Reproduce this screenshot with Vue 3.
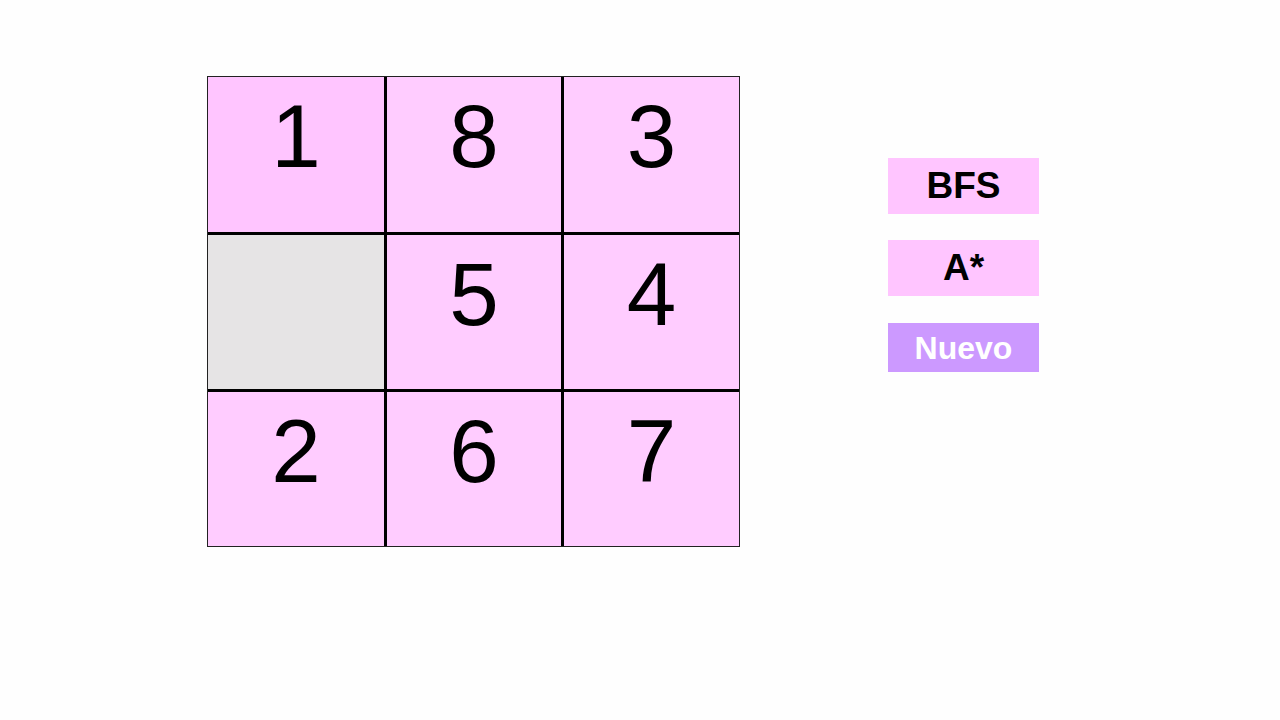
<script setup>
import { ref } from 'vue'

const tiles = ref([1, 8, 3, null, 5, 4, 2, 6, 7])
</script>

<template>
  <main class="page">
    <section class="board" aria-label="8-puzzle">
      <div
        v-for="(tile, index) in tiles"
        :key="index"
        class="tile"
        :class="{ empty: tile === null, active: tile === 1 }"
      >{{ tile }}</div>
    </section>
    <nav class="actions">
      <button type="button" class="action">BFS</button>
      <button type="button" class="action">A*</button>
      <button type="button" class="action reset">Nuevo</button>
    </nav>
  </main>
</template>

<style>
body {
  background: #fefefe;
}
</style>

<style scoped>
.page {
  display: grid;
  grid-template-columns: 207fr 533fr 148fr 151fr 241fr;
  align-items: start;
  padding: 76px 0;
  font-family: "Liberation Sans", Arial, sans-serif;
  color: #000;
}

.board {
  grid-column: 2;
  display: grid;
  grid-template-columns: 176fr 174fr 175fr;
  grid-template-rows: 155px 154px 154px;
  gap: 3px;
  background: #000;
  border: 1px solid #222;
}

.tile {
  background: #ffccff;
  font-size: 89px;
  line-height: 118px;
  text-align: center;
}

.tile.active {
  background: #ffc5ff;
}

.tile.empty {
  background: #e6e4e5;
}

.actions {
  grid-column: 4;
  display: flex;
  flex-direction: column;
  gap: 26px;
  padding-top: 82px;
}

.action {
  height: 56px;
  padding: 0;
  border: 0;
  background: #ffc5ff;
  color: #000;
  font-family: inherit;
  font-size: 37px;
  font-weight: 700;
  line-height: 56px;
  cursor: pointer;
}

.action.reset {
  height: 49px;
  margin-top: 1px;
  background: #cc99ff;
  color: #fff;
  font-size: 32px;
  line-height: 50px;
}
</style>
